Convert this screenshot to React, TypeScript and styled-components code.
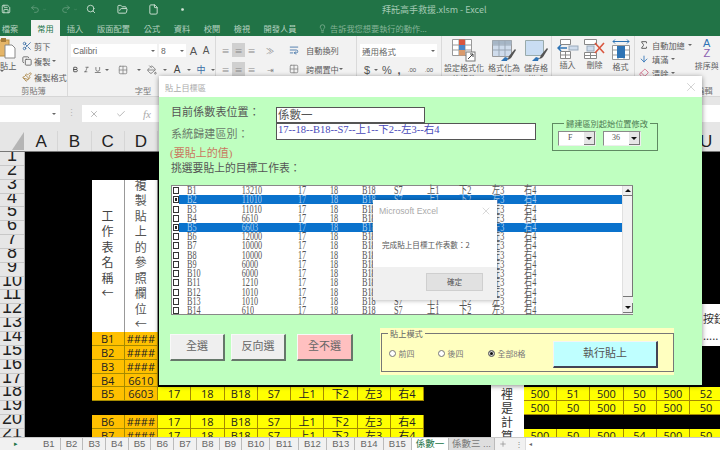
import React from "react";
import styled, { createGlobalStyle } from "styled-components";
import { Save, Undo2, Redo2, Search, FolderOpen, File, Scissors, Copy, Paintbrush, Lightbulb, Plus, X, Check, Sigma, ArrowDown, Eraser, Bold, Italic, Underline, Grid2x2, PaintBucket, WrapText, ChevronDown, Circle } from "lucide-react";

const Global = createGlobalStyle`
  html, body { margin: 0; padding: 0; width: 720px; height: 450px; overflow: hidden; background: #fff; }
  * { box-sizing: border-box; }
  body { font-family: "Liberation Sans", "Noto Sans CJK TC", sans-serif; }
`;

const CJK = `"Noto Sans CJK TC", "Liberation Sans", sans-serif`;
const SERIF = `"Liberation Serif", "Noto Sans CJK TC", serif`;

const Window = styled.div`
  position: relative; width: 720px; height: 450px; overflow: hidden;
  display: flex; flex-direction: column; background: #e6e6e6;
`;
const TitleBar = styled.div`
  height: 18px; background: #217346; display: flex; align-items: center; flex: none;
`;
const Qat = styled.div`display: flex; align-items: center; width: 382px; color: #d5e6da; flex: none;`;
const QatSlot = styled.span<{ $w: number; $dim?: boolean }>`
  width: ${p => p.$w}px; flex: none; display: flex; justify-content: center; align-items: center;
  opacity: ${p => (p.$dim ? 0.38 : 1)}; font-size: 7px;
`;
const TitleText = styled.div`color: #a3c9b3; font: 9px ${CJK};`;
const TabBar = styled.div`
  height: 18px; background: #217346; display: flex; align-items: flex-end; flex: none;
  font: 8.2px ${CJK}; color: #b5d2c0;
`;
const Tab = styled.div<{ $w: number; $active?: boolean }>`
  width: ${p => p.$w}px; height: 16px; flex: none; display: flex; align-items: center; justify-content: center;
  background: ${p => (p.$active ? "#f2f2f2" : "transparent")};
  color: ${p => (p.$active ? "#217346" : "inherit")};
`;
const Tell = styled.div`
  height: 16px; display: flex; align-items: center; gap: 3px; margin-left: 15px; color: #85b498; flex: none;
`;
const Ribbon = styled.div`
  height: 61px; background: #f2f2f2; border-bottom: 1px solid #d6d6d6; display: flex; flex: none;
  font: 8.2px ${CJK}; color: #5c5c5c; overflow: hidden;
`;
const Group = styled.div<{ $w: number; $pt?: number; $pl?: number }>`
  width: ${p => p.$w}px; flex: none; display: flex; flex-direction: column;
  padding: ${p => p.$pt ?? 2}px 0 1px ${p => p.$pl ?? 0}px;
  border-right: 1px solid #dadada;
`;
const Content = styled.div<{ $gap?: number }>`display: flex; flex-direction: column; gap: ${p => p.$gap ?? 0}px;`;
const RibbonLine = styled.div<{ $h?: number; $gap?: number; $pl?: number }>`
  display: flex; align-items: center; gap: ${p => p.$gap ?? 2}px; height: ${p => p.$h ?? 15.5}px;
  padding-left: ${p => p.$pl ?? 0}px; white-space: nowrap; flex: none;
`;
const Split = styled.div`display: flex; flex: none;`;
const PasteCol = styled.div`
  width: 22px; flex: none; display: flex; flex-direction: column; align-items: flex-start; line-height: 10px;
`;
const FontBox = styled.div<{ $w: number; $cjk?: boolean }>`
  width: ${p => p.$w}px; height: 13px; background: #fff; flex: none; display: flex; justify-content: space-between; align-items: center;
  font: 8.5px ${p => (p.$cjk ? CJK : `"Liberation Sans", sans-serif`)}; color: #666; padding: 0 2px 0 2px;
`;
const Caret = styled.span`
  width: 0; height: 0; border-left: 2px solid transparent; border-right: 2px solid transparent; border-top: 2px solid #666; flex: none;
`;
const Glyph = styled.span<{ $w: number; $size?: number; $color?: string; $bold?: boolean }>`
  width: ${p => p.$w}px; flex: none; text-align: center; font: ${p => (p.$bold ? "bold " : "")}${p => p.$size ?? 11}px "Liberation Sans", ${CJK};
  color: ${p => p.$color ?? "#555"};
`;
const Slot = styled.span<{ $w: number; $on?: boolean }>`
  width: ${p => p.$w}px; height: 14px; flex: none; display: flex; align-items: center; justify-content: center;
  background: ${p => (p.$on ? "#d0d0d0" : "transparent")}; color: #888;
`;
const Big = styled.div<{ $w: number }>`
  width: ${p => p.$w}px; display: flex; flex-direction: column; align-items: center; gap: 1px;
  text-align: center; line-height: 10.5px; font-size: 8px; flex: none;
`;
const GroupLabel = styled.div`
  margin-top: auto; text-align: center; font-size: 8.2px; line-height: 10px; color: #777;
`;
const FormulaBar = styled.div`
  height: 34px; background: #e6e6e6; display: flex; flex: none; padding-top: 8px;
`;
const NameBox = styled.div`
  width: 60px; height: 17px; background: #fff; flex: none; display: flex; align-items: center; justify-content: flex-end; padding-right: 4px;
`;
const Dots = styled.div`
  width: 22px; height: 17px; flex: none; text-align: center; color: #b5b5b5; font-size: 9px; line-height: 16px;
`;
const FxBox = styled.div`
  flex: 1; height: 17px; background: #fff; display: flex; align-items: center; gap: 17px;
  padding-left: 7px; color: #aaa; font: italic 11px "Liberation Serif", serif;
`;
const ColHead = styled.div`
  height: 21px; display: flex; background: #e6e6e6; flex: none; border-bottom: 1px solid #777;
`;
const Corner = styled.div`
  width: 25px; flex: none; display: flex; align-items: flex-end; justify-content: flex-end; padding: 0 1px 1px 0;
  &::after {
    content: ""; border-style: solid; border-width: 0 0 18px 12px;
    border-color: transparent transparent #b5b5b5 transparent;
  }
`;
const ColCell = styled.div`
  width: 33.25px; flex: none; text-align: center; font: 17px/21px "Liberation Sans", sans-serif; color: #222;
  border-right: 1px solid #d6d6d6;
`;
const Sheet = styled.div`flex: 1; display: flex; min-height: 0; overflow: hidden;`;
const RowHeads = styled.div`width: 25px; flex: none; background: #e6e6e6; overflow: hidden; border-right: 1px solid #aaa;`;
const RowHead = styled.div`
  height: 13.85px; overflow: hidden; text-align: center; border-bottom: 1px solid #c8c8c8;
  font: 18px/7.5px "Liberation Sans", sans-serif; color: #222;
`;
const Cells = styled.div`
  flex: 1; overflow: hidden; background: #000; min-width: 0; display: grid;
  grid-template-columns: repeat(21, 33.25px); grid-template-rows: repeat(21, 13.85px);
`;
const VCol = styled.div<{ $c: number; $pb: number; $color: string }>`
  grid-column: ${p => p.$c}; grid-row: 3 / 14; background: #fff; border-right: 1px solid #999; overflow: hidden;
  display: flex; flex-direction: column; align-items: center; justify-content: flex-end; padding-bottom: ${p => p.$pb}px;
  color: ${p => p.$color}; font: 12px/15.5px ${CJK};
`;
const VChar = styled.span`flex: none; display: block;`;
const Cell = styled.div<{ $bg: string; $c: number; $r: number }>`
  grid-column: ${p => p.$c}; grid-row: ${p => p.$r}; background: ${p => p.$bg}; border: solid #a58a00; border-width: 0 1px 1px 0;
  text-align: center; font: 11px/13px "Open Sans", ${CJK}; color: #222; overflow: hidden; white-space: nowrap;
`;
const TallV = styled.div<{ $r: number }>`
  grid-column: 15; grid-row: ${p => p.$r}; background: #fff; color: #333; text-align: center; font: 12px/14px ${CJK}; overflow: hidden;
`;
const Note = styled.div`
  grid-column: 21; grid-row: 12 / 15; background: #fff; color: #333; font: 11px/17px ${CJK}; padding: 6px 0 0 13px; white-space: nowrap; overflow: hidden;
`;
const Tabs = styled.div`
  height: 13px; flex: none; background: #f1f1f1; border-top: 1px solid #c9c9c9; display: flex; align-items: center;
  font: 9.5px "Liberation Sans", sans-serif; color: #666;
`;
const TabLead = styled.div`width: 38px; flex: none; font-size: 7px; padding-left: 14px; color: #217346;`;
const SheetTab = styled.div<{ $w: number; $active?: boolean }>`
  width: ${p => p.$w}px; flex: none; height: 12px; line-height: 12px; text-align: center; border-right: 1px solid #bbb;
  font-family: "Liberation Sans", ${CJK};
  background: ${p => (p.$active ? "#fff" : "transparent")}; color: ${p => (p.$active ? "#217346" : "inherit")};
`;
const ThirdTab = styled(SheetTab)`background: #dedede; color: #777;`;
const AddTab = styled.div`width: 30px; flex: none; display: flex; align-items: center; gap: 8px; padding-left: 4px; color: #888; font-size: 8px;`;
const Rest = styled.div`flex: 1; background: #fff; height: 12px; color: #666; font-size: 6px; line-height: 12px; padding-left: 3px; border-left: 1px solid #ddd;`;

const Dialog = styled.div`
  position: absolute; left: 159px; top: 76px; width: 543px; height: 309px; background: #bfffc0;
  box-shadow: 0 1px 5px rgba(0,0,0,.45); display: flex; flex-direction: column;
`;
const DlgTitle = styled.div`
  height: 21px; background: #fff; flex: none; display: flex; align-items: center; justify-content: space-between;
  padding: 0 4px 0 6px; font: 8.2px ${CJK}; color: #aaa;
`;
const DlgBody = styled.div`flex: 1; font-family: ${SERIF}; color: #555; padding-left: 12px;`;
const TopSection = styled.div`display: flex; height: 88px;`;
const Form = styled.div`width: 381px; flex: none; padding-top: 10px;`;
const FieldRow = styled.div`display: flex; align-items: center;`;
const Label = styled.div<{ $mt?: number; $mb?: number; $light?: boolean }>`
  width: 105px; flex: none; font-size: 11px; line-height: 10px; letter-spacing: .1px; white-space: nowrap;
  margin: ${p => p.$mt ?? 0}px 0 ${p => p.$mb ?? 0}px; color: ${p => (p.$light ? "#6a7a6a" : "#555")};
`;
const Input = styled.div<{ $w: number; $h: number; $blue?: boolean }>`
  width: ${p => p.$w}px; height: ${p => p.$h}px; flex: none; background: #fff; border: 1px solid #555;
  font-size: ${p => (p.$blue ? 10.5 : 11.5)}px; line-height: ${p => (p.$blue ? 12 : 15)}px; color: ${p => (p.$blue ? "#4848b8" : "#555")};
  padding-left: 1px; white-space: nowrap; overflow: hidden;
`;
const Hint = styled.div`color: #c9785f; font-size: 11px; line-height: 14px; margin: 6px 0 0 -1px;`;
const Pick = styled.div`font-size: 10.8px; line-height: 16px;`;
const List = styled.div`
  width: 462px; height: 130px; background: #fff; border: 1px solid #888; border-right: none; display: flex;
`;
const ListRows = styled.div`flex: 1; min-width: 0;`;
const LRow = styled.div`display: flex; height: 9.23px; align-items: center; white-space: nowrap; color: #555;`;
const ChkWrap = styled.div`width: 7px; flex: none; display: flex; justify-content: flex-end;`;
const Chk = styled.div<{ $on: boolean }>`
  width: 6px; height: 7px; border: 1px solid #333; background: #fff; padding: 1px;
  &::after { content: ""; display: ${p => (p.$on ? "block" : "none")}; width: 100%; height: 100%; background: #222; }
`;
const LCells = styled.div<{ $sel: boolean }>`
  flex: 1; display: flex; height: 100%; align-items: center; padding-left: 8px;
  background: ${p => (p.$sel ? "#0a72cc" : "transparent")}; color: ${p => (p.$sel ? "#a9cdef" : "inherit")};
`;
const LC = styled.div<{ $w: number }>`
  width: ${p => p.$w}px; flex: none; font-size: 8.2px; line-height: 9px; transform: scaleY(1.4);
`;
const Scroll = styled.div`
  width: 11px; flex: none; display: flex; flex-direction: column; background: #f0f0f0; border-left: 1px solid #e0e0e0;
`;
const ScrollBtn = styled.div`
  height: 10px; flex: none; background: #efefef; border-right: 1px solid #777; border-bottom: 1px solid #777; display: flex; align-items: center; justify-content: center;
  &::after { content: ""; border-left: 3px solid transparent; border-right: 3px solid transparent; }
`;
const Up = styled(ScrollBtn)`&::after { border-bottom: 3px solid #111; }`;
const Down = styled(ScrollBtn)`margin-bottom: 1px; &::after { border-top: 3px solid #111; }`;
const Thumb = styled.div`flex: 1; margin-bottom: 6px; background: #f3f3f3; border-bottom: 1px solid #777; border-right: 1px solid #777;`;

const PosBox = styled.fieldset`
  width: 106px; height: 33px; margin: 21px 0 0 0; padding: 3px 0 0 5px; border: 1px solid #5f8a62;
  min-inline-size: 0; flex: none; display: block;
`;
const Legend = styled.legend`
  font: 8.2px/10px ${CJK}; color: #4e7a52; padding: 0 2px; margin-left: 6px; white-space: nowrap;
`;
const PosInner = styled.div`display: flex; gap: 7px;`;
const Combo = styled.div<{ $pad: number }>`
  width: 38px; height: 15px; background: #fff; border: 1px solid #8a8a8a; border-bottom-color: #eee; border-right-color: #eee;
  display: flex; font-size: 8px; line-height: 12px; color: #555; justify-content: space-between; padding-left: ${p => p.$pad}px;
`;
const ComboArrow = styled.div`
  width: 11px; background: #e6e6e6; border-right: 1px solid #777; border-bottom: 1px solid #777; display: flex; align-items: center; justify-content: center;
  &::after { content: ""; border-left: 3px solid transparent; border-right: 3px solid transparent; border-top: 3px solid #111; }
`;
const Footer = styled.div`display: flex; padding-top: 19px; align-items: flex-start;`;
const Btn = styled.div<{ $w: number; $bg: string; $ml: number }>`
  width: ${p => p.$w}px; height: 27px; margin-left: ${p => p.$ml}px; flex: none; background: ${p => p.$bg};
  border: 1px solid #f8f8f8; border-right: 2px solid #66776a; border-bottom: 2px solid #66776a;
  text-align: center; font-size: 11px; line-height: 23px; color: #666;
`;
const ModeWrap = styled.div`
  width: 294px; height: 47px; margin: -6px 0 0 27px; padding-left: 1px; flex: none; background: #ffffc0;
`;
const ModeBox = styled.fieldset`
  margin: 0; width: 293px; height: 44px; border: 1px solid #777; padding: 0; min-inline-size: 0; display: block;
`;
const ModeLegend = styled.legend`
  font: 8.2px/10px ${CJK}; color: #666; padding: 0 2px; margin-left: 6px; white-space: nowrap;
`;
const ModeInner = styled.div`display: flex; align-items: center; height: 33px; padding-left: 6.5px;`;
const Radio = styled.div<{ $w: number }>`
  width: ${p => p.$w}px; flex: none; display: flex; align-items: center; gap: 3px; font: 8px ${SERIF}; color: #777; margin-bottom: 2px;
`;
const Dot = styled.div<{ $on?: boolean }>`
  width: 7px; height: 7px; border-radius: 50%; background: ${p => (p.$on ? "#111" : "#fff")}; border: 1px solid #777; flex: none;
  box-shadow: ${p => (p.$on ? "inset 0 0 0 1px #ddd" : "none")};
`;
const Run = styled.div`
  width: 105px; height: 27px; flex: none; background: #bfffff; border: 1px solid #f4f4f4; border-right: 2px solid #445; border-bottom: 2px solid #445;
  text-align: center; font: 11px/23px ${SERIF}; color: #555;
`;

const Msg = styled.div`
  position: absolute; left: 373px; top: 200px; width: 124px; height: 100px; background: #fff; box-shadow: 0 0 5px rgba(0,0,0,.35);
  display: flex; flex-direction: column; font: 7.6px ${CJK}; color: #555;
`;
const MsgTitle = styled.div`
  display: flex; justify-content: space-between; align-items: center; padding: 1px 5px 0 6px; color: #aaa; font: 8.7px "Liberation Sans", sans-serif; height: 21px; flex: none;
`;
const MsgText = styled.div`padding: 18px 0 0 9px; height: 46px; flex: none; white-space: nowrap;`;
const MsgFoot = styled.div`flex: 1; background: #f0f0f0; display: flex; justify-content: flex-end; align-items: flex-start; padding: 6px 14px 0 0;`;
const OkBtn = styled.div`width: 57px; height: 18px; background: #e1e1e1; border: 1px solid #cfcfcf; text-align: center; line-height: 16px;`;

const names = ["B1","B2","B3","B4","B5","B6","B7","B8","B9","B10","B11","B12","B13","B14"];
const vals = ["13210","11010","11010","6610","6603","12000","10000","10000","6000","6000","1210","1010","1010","610"];
const yellow = ["17","18","B18","S7","上1","下2","左3","右4"];
const listCols = [32, 32, 32, 33, 32, 33, 32, 30];
const tabs = ["B1","B2","B3","B4","B5","B6","B7","B8","B9","B10","B11","B12","B13","B14","B15"];

const orange: [number, string, string][] = [
  [14, "B1", "####"], [15, "B2", "####"], [16, "B3", "####"], [17, "B4", "6610"],
  [18, "B5", "6603"], [20, "B6", "####"], [21, "B7", "####"],
];
const fives: [number, string[]][] = [
  [18, ["500", "51", "500", "50", "500", "52"]],
  [19, ["500", "50", "500", "50", "500", "50"]],
  [21, ["500", "50", "500", "54", "500", "50"]],
];

const PasteIcon = () => (
  <svg width="16" height="22" viewBox="0 0 16 22">
    <rect x="-3" y="2" width="12" height="16" fill="#e5b567" stroke="#b98c3f" />
    <rect x="1" y="0" width="5" height="4" fill="#a57b3a" />
    <path d="M5 7h7l3 3v10H5z" fill="#fff" stroke="#888" />
  </svg>
);
const CondIcon = () => (
  <svg width="26" height="24" viewBox="0 0 26 24">
    <path d="M1.5 1.5h19v16h-19zM8 1.5v16M14 1.5v16M1.5 7h19M1.5 12h19" fill="#fff" stroke="#999" />
    <rect x="8" y="1.5" width="6" height="5.5" fill="#d9563f" />
    <rect x="8" y="7" width="6" height="5" fill="#4a86c8" />
    <rect x="8" y="12" width="6" height="5.5" fill="#d99a6c" />
    <rect x="15" y="14" width="9" height="9" fill="#fff" stroke="#777" />
    <path d="M17 21l5-5M19 16h3v3" stroke="#444" fill="none" />
  </svg>
);
const TableIcon = () => (
  <svg width="26" height="24" viewBox="0 0 26 24">
    <path d="M1.5 2.5h19v16h-19z" fill="#cfdcec" stroke="#999" />
    <path d="M1.5 2.5h19v4h-19z" fill="#a6b6c6" />
    <path d="M8 2.5v16M14 2.5v16M1.5 7h19M1.5 12h19" stroke="#9aa7b5" fill="none" />
    <path d="M13 22c3 0 4-1 5-4l6-7 1 1-5 8c-2 2-4 2-7 2z" fill="#555" />
    <path d="M10 23l4-4 3 1-1 3z" fill="#2f74b5" />
  </svg>
);
const StyleIcon = () => (
  <svg width="24" height="24" viewBox="0 0 24 24">
    <path d="M1.5 2.5h18v15h-18z" fill="#c9ddf2" stroke="#9aa" />
    <path d="M12 21c3 0 4-1 5-4l6-7 1 1-5 8c-2 2-4 2-7 2z" fill="#555" />
    <path d="M8 23l4-4 3 1-1 3z" fill="#2f74b5" />
  </svg>
);
const InsertIcon = () => (
  <svg width="22" height="20" viewBox="0 0 22 20">
    <path d="M3.5 .5h10v5h-10zM3.5 12.5h10v7h-10zM8.5 12.5v7M3.5 16h10" fill="#fff" stroke="#888" />
    <rect x="12" y="7" width="9" height="4" fill="#cfdcec" stroke="#9ab" />
    <path d="M1 9h9M4 6L1 9l3 3" stroke="#2f74b5" strokeWidth="1.5" fill="none" />
  </svg>
);
const DeleteIcon = () => (
  <svg width="22" height="20" viewBox="0 0 22 20">
    <path d="M.5 .5h12v5H.5zM.5 13.5h12v6H.5zM6.5 13.5v6M.5 16.5h12" fill="#fff" stroke="#888" />
    <rect x="3" y="7" width="7" height="5" fill="#cfdcec" stroke="#9ab" />
    <path d="M11 4l9 10M20 4l-9 10" stroke="#d9563f" strokeWidth="1.6" fill="none" />
  </svg>
);
const FormatIcon = () => (
  <svg width="20" height="22" viewBox="0 0 20 22">
    <path d="M1.5 6.5h17v14h-17zM7 6.5v14M13 6.5v14M1.5 11h17M1.5 16h17" fill="#fff" stroke="#999" />
    <rect x="6" y="7" width="8" height="12" fill="#2f74b5" />
    <path d="M2 2.5h16M2 2.5l2-2M2 2.5l2 2M18 2.5l-2-2M18 2.5l-2 2" stroke="#2f74b5" fill="none" />
  </svg>
);
const SortIcon = () => (
  <svg width="16" height="8" viewBox="0 0 16 8"><path d="M9 1h6l-3 4z" fill="#666" /></svg>
);
const Az = styled.div`
  width: 22px; height: 22px; display: flex; flex-direction: column; align-items: center; font: 11px/10px "Liberation Sans", sans-serif;
`;
const AzA = styled.span`color: #2f74b5;`;
const AzZ = styled.span`color: #8a5fb0;`;

export default function App() {
  return (
    <Window>
      <Global />
      <TitleBar>
        <Qat>
          <QatSlot $w={11}><Save size={10} /></QatSlot>
          <QatSlot $w={18} />
          <QatSlot $w={12} $dim><Undo2 size={10} /></QatSlot>
          <QatSlot $w={7} $dim><ChevronDown size={5} /></QatSlot>
          <QatSlot $w={12} $dim />
          <QatSlot $w={12} $dim><Redo2 size={10} /></QatSlot>
          <QatSlot $w={7} $dim><ChevronDown size={5} /></QatSlot>
          <QatSlot $w={6} />
          <QatSlot $w={12}><Search size={10} /></QatSlot>
          <QatSlot $w={18} />
          <QatSlot $w={14}><FolderOpen size={11} /></QatSlot>
          <QatSlot $w={18} />
          <QatSlot $w={12}><File size={11} /></QatSlot>
          <QatSlot $w={20} />
          <QatSlot $w={6}><Circle size={3} fill="currentColor" /></QatSlot>
        </Qat>
        <TitleText>拜託高手救援.xlsm - Excel</TitleText>
      </TitleBar>
      <TabBar>
        <Tab $w={20}>檔案</Tab>
        <Tab $w={11} />
        <Tab $w={29} $active>常用</Tab>
        <Tab $w={30}>插入</Tab>
        <Tab $w={47}>版面配置</Tab>
        <Tab $w={30}>公式</Tab>
        <Tab $w={30}>資料</Tab>
        <Tab $w={30}>校閱</Tab>
        <Tab $w={30}>檢視</Tab>
        <Tab $w={46}>開發人員</Tab>
        <Tell><Lightbulb size={9} />告訴我您想要執行的動作...</Tell>
      </TabBar>
      <Ribbon>
        <Group $w={68}>
          <Split>
            <PasteCol><PasteIcon />貼上<Caret /></PasteCol>
            <Content>
              <RibbonLine><Scissors size={10} color="#3a6ea5" />剪下</RibbonLine>
              <RibbonLine><Copy size={10} />複製 <Caret /></RibbonLine>
              <RibbonLine><Paintbrush size={10} color="#a88240" />複製格式</RibbonLine>
            </Content>
          </Split>
          <GroupLabel>剪貼簿</GroupLabel>
        </Group>
        <Group $w={148} $pt={8} $pl={3}>
          <Content $gap={6}>
            <RibbonLine $h={13}>
              <FontBox $w={86}>Calibri<Caret /></FontBox>
              <FontBox $w={27}>8<Caret /></FontBox>
              <Glyph $w={11} $size={11}>A</Glyph><Glyph $w={10} $size={10}>A</Glyph>
            </RibbonLine>
            <RibbonLine $h={13} $gap={4} $pl={1}>
              <Bold size={9} color="#444" strokeWidth={3} /><Italic size={9} color="#444" /><Underline size={10} color="#444" /><Caret />
              <Slot $w={20}><Grid2x2 size={10} /></Slot><Caret />
              <Slot $w={14}><PaintBucket size={10} color="#777" /></Slot><Caret />
              <Glyph $w={12} $size={10} $color="#444">A</Glyph><Caret />
              <Glyph $w={12} $size={9} $color="#3a6ea5">中</Glyph><Caret />
            </RibbonLine>
          </Content>
          <GroupLabel>字型</GroupLabel>
        </Group>
        <Group $w={141} $pt={7} $pl={3}>
          <Content $gap={5}>
            <RibbonLine $h={14} $gap={0}>
              <Slot $w={13}>≡</Slot><Slot $w={13} $on>≡</Slot><Slot $w={13}>≡</Slot>
              <Slot $w={24}>≫</Slot>
              <Slot $w={24}><WrapText size={10} color="#3a6ea5" /></Slot>自動換列
            </RibbonLine>
            <RibbonLine $h={14} $gap={0}>
              <Slot $w={13}>≡</Slot><Slot $w={13} $on>≡</Slot><Slot $w={13}>≡</Slot>
              <Slot $w={24}>⇥</Slot>
              <Slot $w={24}><Grid2x2 size={10} /></Slot>跨欄置中 <Caret />
            </RibbonLine>
          </Content>
        </Group>
        <Group $w={85} $pt={8} $pl={3}>
          <Content $gap={6}>
            <RibbonLine $h={13}><FontBox $w={77} $cjk>通用格式<Caret /></FontBox></RibbonLine>
            <RibbonLine $h={13} $gap={3} $pl={3}>
              <Glyph $w={8} $size={11}>$</Glyph><Caret /><Glyph $w={12} $size={11}>%</Glyph><Glyph $w={6} $size={11} $bold>,</Glyph>
              <Glyph $w={14} $size={6}>.00</Glyph><Glyph $w={14} $size={6}>.00</Glyph>
            </RibbonLine>
          </Content>
        </Group>
        <Group $w={110}>
          <Split>
            <Big $w={44}><CondIcon />設定格式化的條件</Big>
            <Big $w={36}><TableIcon />格式化為表格</Big>
            <Big $w={28}><StyleIcon />儲存格樣式</Big>
          </Split>
        </Group>
        <Group $w={83} $pl={2} $pt={3}>
          <Split>
            <Big $w={27}><InsertIcon />插入</Big>
            <Big $w={27}><DeleteIcon />刪除</Big>
            <Big $w={25}><FormatIcon />格式</Big>
          </Split>
        </Group>
        <Group $w={136} $pl={4}>
          <Split>
            <Content>
              <RibbonLine $h={14} $gap={3}><Sigma size={10} color="#444" />自動加總 <Caret /></RibbonLine>
              <RibbonLine $h={14} $gap={3}><ArrowDown size={10} color="#2a6fb5" />填滿 <Caret /></RibbonLine>
              <RibbonLine $h={14} $gap={3}><Eraser size={10} color="#d06080" />清除 <Caret /></RibbonLine>
            </Content>
            <Big $w={30}><Az><AzA>A</AzA><AzZ>Z</AzZ></Az>排序與</Big>
            <SortIcon />
          </Split>
          <GroupLabel>編輯</GroupLabel>
        </Group>
      </Ribbon>
      <FormulaBar>
        <NameBox><Caret /></NameBox>
        <Dots>⋮</Dots>
        <FxBox><X size={10} /><Check size={10} /><span>fx</span></FxBox>
      </FormulaBar>
      <ColHead>
        <Corner />
        {"ABCDEFGHIJKLMNOPQRSTU".split("").map(c => <ColCell key={c}>{c}</ColCell>)}
      </ColHead>
      <Sheet>
        <RowHeads>
          {Array.from({ length: 21 }, (_, i) => <RowHead key={i}>{i + 1}</RowHead>)}
        </RowHeads>
        <Cells>
          <VCol $c={3} $pb={31} $color="#444">{[..."工作表名稱←"].map(c => <VChar key={c}>{c}</VChar>)}</VCol>
          <VCol $c={4} $pb={0} $color="#555">{[..."複製貼上的參照欄位←"].map(c => <VChar key={c}>{c}</VChar>)}</VCol>
          <Note>按鈕<br />.....</Note>
          {orange.map(([r, a, b]) => (
            <React.Fragment key={r}>
              <Cell $bg="#ffc000" $c={3} $r={r}>{a}</Cell>
              <Cell $bg="#ffc000" $c={4} $r={r}>{b}</Cell>
              {r >= 18 && yellow.map((t, j) => <Cell key={j} $bg="#ffff00" $c={5 + j} $r={r}>{t}</Cell>)}
            </React.Fragment>
          ))}
          {["", "裡", "是", "計", "算"].map((t, i) => <TallV key={i} $r={17 + i}>{t}</TallV>)}
          {fives.map(([r, row]) => row.map((t, j) => <Cell key={`${r}-${j}`} $bg="#ffff00" $c={16 + j} $r={r}>{t}</Cell>))}
        </Cells>
      </Sheet>
      <Tabs>
        <TabLead>▸</TabLead>
        {tabs.map((t, i) => <SheetTab key={t} $w={i < 9 ? 22.7 : 28.3}>{t}</SheetTab>)}
        <SheetTab $w={37} $active>係數一</SheetTab>
        <ThirdTab $w={46}>係數三 ...</ThirdTab>
        <AddTab><Plus size={8} />⋮</AddTab>
        <Rest>◂</Rest>
      </Tabs>

      <Dialog>
        <DlgTitle>貼上目標區<X size={14} strokeWidth={0.9} /></DlgTitle>
        <DlgBody>
          <TopSection>
            <Form>
              <FieldRow>
                <Label $mb={6}>目前係數表位置：</Label>
                <Input $w={149} $h={16}>係數一</Input>
              </FieldRow>
              <FieldRow>
                <Label $mt={5} $light>系統歸建區別：</Label>
                <Input $w={260} $h={17} $blue>17--18--B18--S7--上1--下2--左3--右4</Input>
              </FieldRow>
              <Hint>(要貼上的值)</Hint>
              <Pick>挑選要貼上的目標工作表：</Pick>
            </Form>
            <PosBox>
              <Legend>歸建區別起始位置修改</Legend>
              <PosInner>
                <Combo $pad={9}>F<ComboArrow /></Combo>
                <Combo $pad={8}>36<ComboArrow /></Combo>
              </PosInner>
            </PosBox>
          </TopSection>
          <List>
            <ListRows>
              {names.map((n, i) => {
                const sel = i === 1 || i === 4;
                return (
                  <LRow key={n}>
                    <ChkWrap><Chk $on={sel} /></ChkWrap>
                    <LCells $sel={sel}>
                      <LC $w={54.7}>{n}</LC><LC $w={56.3}>{vals[i]}</LC>
                      {yellow.map((t, j) => <LC key={j} $w={listCols[j]}>{t}</LC>)}
                    </LCells>
                  </LRow>
                );
              })}
            </ListRows>
            <Scroll><Up /><Thumb /><Down /></Scroll>
          </List>
          <Footer>
            <Btn $w={55} $bg="#efefef" $ml={-1}>全選</Btn>
            <Btn $w={55} $bg="#efefef" $ml={6}>反向選</Btn>
            <Btn $w={56} $bg="#ffc0c0" $ml={11}>全不選</Btn>
            <ModeWrap>
              <ModeBox>
                <ModeLegend>貼上模式</ModeLegend>
                <ModeInner>
                  <Radio $w={49}><Dot />前四</Radio>
                  <Radio $w={50}><Dot />後四</Radio>
                  <Radio $w={65.5}><Dot $on />全部8格</Radio>
                  <Run>執行貼上</Run>
                </ModeInner>
              </ModeBox>
            </ModeWrap>
          </Footer>
        </DlgBody>
      </Dialog>
      <Msg>
        <MsgTitle>Microsoft Excel<X size={12} strokeWidth={0.9} /></MsgTitle>
        <MsgText>完成貼上目標工作表數：2</MsgText>
        <MsgFoot><OkBtn>確定</OkBtn></MsgFoot>
      </Msg>
    </Window>
  );
}
